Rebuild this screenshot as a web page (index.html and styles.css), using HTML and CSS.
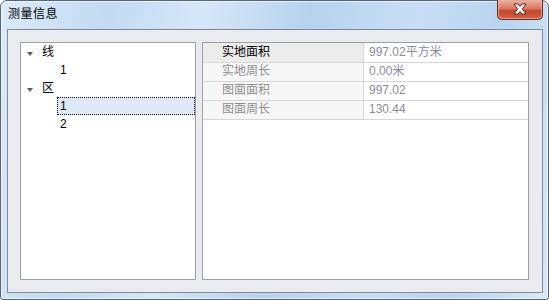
FILE: index.html
```html
<!DOCTYPE html>
<html lang="zh-CN">
  <head>
    <meta charset="UTF-8" />
    <title>测量信息</title>
    <link rel="stylesheet" href="styles.css">
  </head>
  <body>
    <div class="window">
      <div class="titlebar">
        <span class="title">测量信息</span>
        <button class="close" title="关闭">
          <svg width="46" height="20" viewBox="0 0 46 20">
            <defs>
              <linearGradient id="red" x1="0" y1="0" x2="0" y2="1">
                <stop offset="0" stop-color="#eab1a3" />
                <stop offset="0.45" stop-color="#d8765f" />
                <stop offset="0.55" stop-color="#c2452c" />
                <stop offset="1" stop-color="#d0654a" />
              </linearGradient>
            </defs>
            <path d="M0.5 0 V15.5 Q0.5 19.5 4.5 19.5 H41.5 Q45.5 19.5 45.5 15.5 V0" fill="url(#red)" stroke="#6b2a1e" />
            <path d="M1.5 0 V15 Q1.5 18.5 5 18.5 H41 Q44.5 18.5 44.5 15 V0" fill="none" stroke="#f3c5b8" stroke-opacity="0.6" />
            <path d="M17 4 H21 L23 6.5 L25 4 H29 L25.3 9 L29 14 H25 L23 11.5 L21 14 H17 L20.7 9 Z" fill="#fff" stroke="#5a2a22" stroke-width="1" stroke-linejoin="round" />
          </svg>
        </button>
      </div>

      <div class="client">
        <div class="pane tree">
          <div class="node">
            <span class="twisty"></span>
            <span class="label">线</span>
          </div>
          <div class="node child">
            <span class="label">1</span>
          </div>
          <div class="node">
            <span class="twisty"></span>
            <span class="label">区</span>
          </div>
          <div class="node child">
            <span class="label selected">1</span>
          </div>
          <div class="node child">
            <span class="label">2</span>
          </div>
        </div>

        <div class="pane props">
          <div class="row first">
            <div class="name">实地面积</div>
            <div class="value">997.02平方米</div>
          </div>
          <div class="row">
            <div class="name">实地周长</div>
            <div class="value">0.00米</div>
          </div>
          <div class="row">
            <div class="name">图面面积</div>
            <div class="value">997.02</div>
          </div>
          <div class="row">
            <div class="name">图面周长</div>
            <div class="value">130.44</div>
          </div>
        </div>
      </div>
    </div>
  </body>
</html>
```

FILE: styles.css
```css
body {
  margin: 0;
  font-family: "Liberation Sans", "Noto Sans CJK SC", sans-serif;
  font-size: 12px;
  background: #fff;
}

.window {
  width: 549px;
  height: 300px;
  box-sizing: border-box;
  border: 1px solid #55657a;
  border-radius: 7px 7px 3px 3px;
  background: linear-gradient(100deg, #dceaf9 0%, #c2daf2 18%, #d6e7f8 34%, #b7d2ee 52%, #c9def5 70%, #b9d3ef 84%, #d9e8f8 100%);
  box-shadow: inset 0 0 0 1px rgba(255, 255, 255, 0.6);
  display: flex;
  flex-direction: column;
}

.titlebar {
  height: 28px;
  display: flex;
  justify-content: space-between;
  align-items: flex-start;
  padding: 0 5px 0 7px;
}

.title {
  line-height: 26px;
  color: #000;
  letter-spacing: 0.5px;
}

.close {
  width: 46px;
  height: 20px;
  padding: 0;
  margin-top: -1px;
  border: none;
  background: none;
  display: block;
  cursor: pointer;
}

.close svg {
  display: block;
}

.client {
  margin: 0 5px 6px 6px;
  flex: 1;
  border: 1px solid #7f8b9b;
  background: #e9ebef;
  display: grid;
  grid-template-columns: 176px 1fr;
  gap: 6px;
  padding: 12px 13px 12px 12px;
}

.pane {
  background: #fff;
  border: 1px solid #9d9ea6;
}

/* tree */
.node {
  height: 18px;
  line-height: 18px;
  display: flex;
  align-items: center;
  padding-left: 6px;
  color: #000;
}

.twisty {
  width: 14px;
  height: 18px;
  position: relative;
}

.twisty::before {
  content: "";
  position: absolute;
  left: 0;
  top: 9px;
  border-left: 3px solid transparent;
  border-right: 3px solid transparent;
  border-top: 4px solid #5c5c5c;
}

.node .label {
  padding: 0;
  height: 18px;
  box-sizing: border-box;
  border: 1px solid transparent;
  line-height: 16px;
}

.node.child {
  padding-left: 36px;
}

.node.child .label {
  padding-left: 2px;
}

.node .label.selected {
  flex: 1;
  background: #dfe8f8;
  border: 1px dotted #000;
}

/* property grid */
.row {
  display: grid;
  grid-template-columns: 161px 1fr;
  height: 18px;
  border-bottom: 1px solid #d6d6d6;
  line-height: 17px;
}

.row.first {
  height: 19px;
  line-height: 18px;
}

.name {
  padding-left: 19px;
  background: #f7f7f7;
  color: #8e8e8e;
  border-right: 1px solid #d6d6d6;
}

.row.first .name {
  background: #ececec;
  color: #000;
}

.value {
  padding-left: 5px;
  color: #8d8a99;
}
```
